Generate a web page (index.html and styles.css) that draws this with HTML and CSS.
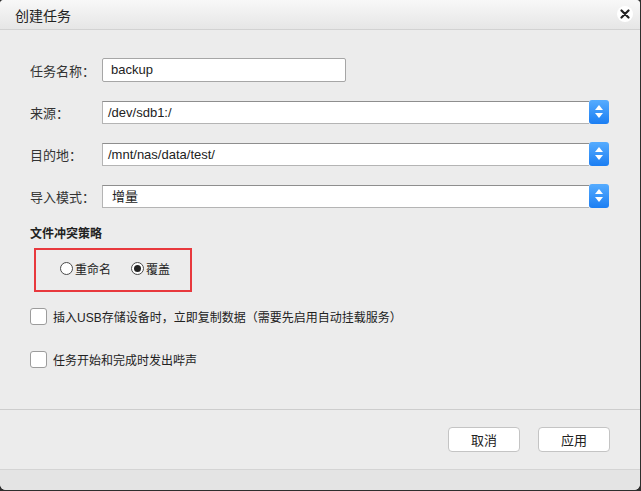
FILE: index.html
```html
<!DOCTYPE html>
<html lang="zh-CN">
<head>
    <meta charset="UTF-8">
    <meta name="viewport" content="width=device-width, initial-scale=1.0">
    <title>创建任务</title>
    <link rel="stylesheet" href="styles.css">
</head>
<body>
    <div class="dialog">
        <div class="titlebar">
            <span class="title">创建任务</span>
            <span class="close">
                <svg width="10" height="10" viewBox="0 0 10 10"><path d="M1.5 1.5 L8.5 8.5 M8.5 1.5 L1.5 8.5" stroke="#222" stroke-width="2.2" stroke-linecap="round"/></svg>
            </span>
        </div>

        <div class="content">
            <div class="row">
                <label>任务名称：</label>
                <div class="input">backup</div>
            </div>
            <div class="row">
                <label>来源：</label>
                <div class="select">
                    <div class="select-text">/dev/sdb1:/</div>
                    <div class="spin"><i class="up"></i><i class="down"></i></div>
                </div>
            </div>
            <div class="row">
                <label>目的地：</label>
                <div class="select">
                    <div class="select-text">/mnt/nas/data/test/</div>
                    <div class="spin"><i class="up"></i><i class="down"></i></div>
                </div>
            </div>
            <div class="row">
                <label>导入模式：</label>
                <div class="select">
                    <div class="select-text wide">增量</div>
                    <div class="spin"><i class="up"></i><i class="down"></i></div>
                </div>
            </div>

            <div class="section-title">文件冲突策略</div>
            <div class="radio-box">
                <span class="radio"></span><span class="radio-label">重命名</span>
                <span class="radio checked"></span><span class="radio-label">覆盖</span>
            </div>

            <div class="check first">
                <span class="box"></span>
                <span>插入USB存储设备时，立即复制数据（需要先启用自动挂载服务）</span>
            </div>
            <div class="check">
                <span class="box"></span>
                <span>任务开始和完成时发出哔声</span>
            </div>
        </div>

        <div class="footer">
            <button class="btn">取消</button>
            <button class="btn">应用</button>
        </div>
        <div class="bottom"></div>
    </div>
</body>
</html>
```

FILE: styles.css
```css
* {
    margin:0;
    padding:0;
    box-sizing: border-box;
}
body {
    background: #2e2e2e;
    font-family: "Liberation Sans", "Noto Sans CJK SC", sans-serif;
    color: #222;
}
.dialog {
    width: 640px;
    height: 490px;
    background: #ececec;
    border-radius: 4px 4px 6px 6px;
    overflow: hidden;
    display: flex;
    flex-direction: column;
}
.titlebar {
    height: 30px;
    flex: none;
    background: linear-gradient(#f8f8f8, #e6e6e6);
    border-bottom: 1px solid #d2d2d2;
    display: flex;
    align-items: center;
    justify-content: space-between;
    padding: 0 7px 0 15px;
}
.title {
    font-size: 14px;
}
.close {
    width: 16px;
    height: 16px;
    border-radius: 50%;
    background: #fff;
    display: flex;
    justify-content: center;
    align-items: center;
    margin-top: -2px;
}
.content {
    height: 380px;
    flex: none;
    padding: 28px 0 0 30px;
    border-bottom: 1px solid #cdcdcd;
}
.row {
    display: flex;
    align-items: center;
    height: 24px;
    margin-bottom: 18px;
}
.row label {
    width: 72px;
    font-size: 13px;
    color: #333;
}
.input {
    width: 244px;
    height: 24px;
    background: #fff;
    border: 1px solid #a6a6a6;
    border-radius: 2px;
    font-size: 13px;
    line-height: 22px;
    padding-left: 8px;
}
.select {
    width: 507px;
    height: 23px;
    display: flex;
}
.select-text {
    flex: 1;
    background: #fff;
    border: 1px solid #b4b4b4;
    border-top-color: #8e8e8e;
    border-right: none;
    font-size: 13px;
    line-height: 21px;
    padding-left: 5px;
}
.select-text.wide {
    padding-left: 9px;
}
.spin {
    width: 20px;
    height: 24px;
    margin-top: -1px;
    background: linear-gradient(#56acff, #1b7ef3);
    border-radius: 3px;
    display: flex;
    flex-direction: column;
    justify-content: center;
    align-items: center;
    gap: 3px;
}
.spin i {
    width: 0;
    height: 0;
    border-left: 4px solid transparent;
    border-right: 4px solid transparent;
}
.spin .up {
    border-bottom: 5px solid #fff;
}
.spin .down {
    border-top: 5px solid #fff;
}
.section-title {
    font-size: 12px;
    font-weight: bold;
    line-height: 16px;
    margin-top: 1px;
}
.radio-box {
    width: 158px;
    height: 44px;
    margin: 6px 0 0 4px;
    border: 2px solid #e8383d;
    display: flex;
    align-items: center;
    padding: 0 0 4px 24px;
    font-size: 12px;
}
.radio {
    width: 13px;
    height: 13px;
    border: 1px solid #4a4a4a;
    border-radius: 50%;
    background: #fff;
    display: flex;
    justify-content: center;
    align-items: center;
    margin-right: 2px;
}
.radio.checked::after {
    content: "";
    width: 7px;
    height: 7px;
    border-radius: 50%;
    background: #222;
}
.radio-label {
    margin-right: 20px;
}
.check {
    display: flex;
    align-items: center;
    font-size: 12px;
    margin-top: 26px;
}
.check.first {
    margin-top: 16px;
}
.check .box {
    width: 17px;
    height: 17px;
    background: #fff;
    border: 1px solid #9c9c9c;
    border-radius: 3px;
    margin-right: 6px;
}
.footer {
    height: 60px;
    flex: none;
    border-bottom: 1px solid #d4d4d4;
    display: flex;
    justify-content: flex-end;
    align-items: flex-start;
    padding: 17px 30px 0 0;
    gap: 18px;
}
.btn {
    width: 72px;
    height: 25px;
    background: #fff;
    border: 1px solid #c4c4c4;
    border-radius: 4px;
    font-family: "Liberation Sans", "Noto Sans CJK SC", sans-serif;
    font-size: 13px;
    color: #222;
}
.bottom {
    flex: 1;
    background: #e4e4e4;
}
```
